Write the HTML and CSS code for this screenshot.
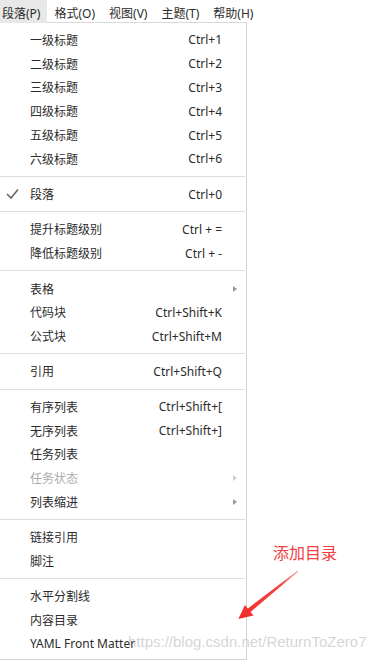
FILE: index.html
```html
<!DOCTYPE html>
<html lang="zh-CN">
<head>
    <meta charset="UTF-8">
    <meta name="viewport" content="width=device-width, initial-scale=1.0">
    <title>段落菜单</title>
    <link rel="stylesheet" href="styles.css">
</head>
<body>
    <div class="menubar">
        <div class="menubar-item active">段落(P)</div>
        <div class="menubar-item">格式(O)</div>
        <div class="menubar-item">视图(V)</div>
        <div class="menubar-item">主题(T)</div>
        <div class="menubar-item">帮助(H)</div>
    </div>

    <div class="menu">
        <div class="menu-item"><span class="check"></span><span class="label">一级标题</span><span class="key">Ctrl+1</span><span class="sub"></span></div>
        <div class="menu-item"><span class="check"></span><span class="label">二级标题</span><span class="key">Ctrl+2</span><span class="sub"></span></div>
        <div class="menu-item"><span class="check"></span><span class="label">三级标题</span><span class="key">Ctrl+3</span><span class="sub"></span></div>
        <div class="menu-item"><span class="check"></span><span class="label">四级标题</span><span class="key">Ctrl+4</span><span class="sub"></span></div>
        <div class="menu-item"><span class="check"></span><span class="label">五级标题</span><span class="key">Ctrl+5</span><span class="sub"></span></div>
        <div class="menu-item"><span class="check"></span><span class="label">六级标题</span><span class="key">Ctrl+6</span><span class="sub"></span></div>
        <div class="separator"></div>
        <div class="menu-item">
            <span class="check">
                <svg width="14" height="12" viewBox="0 0 14 12"><polyline points="1,6 5,10 12,1.5" fill="none" stroke="#666" stroke-width="1.6"/></svg>
            </span>
            <span class="label">段落</span><span class="key">Ctrl+0</span><span class="sub"></span>
        </div>
        <div class="separator"></div>
        <div class="menu-item"><span class="check"></span><span class="label">提升标题级别</span><span class="key">Ctrl + =</span><span class="sub"></span></div>
        <div class="menu-item"><span class="check"></span><span class="label">降低标题级别</span><span class="key">Ctrl + -</span><span class="sub"></span></div>
        <div class="separator"></div>
        <div class="menu-item"><span class="check"></span><span class="label">表格</span><span class="key"></span><span class="sub"><i class="arrow"></i></span></div>
        <div class="menu-item"><span class="check"></span><span class="label">代码块</span><span class="key">Ctrl+Shift+K</span><span class="sub"></span></div>
        <div class="menu-item"><span class="check"></span><span class="label">公式块</span><span class="key">Ctrl+Shift+M</span><span class="sub"></span></div>
        <div class="separator"></div>
        <div class="menu-item"><span class="check"></span><span class="label">引用</span><span class="key">Ctrl+Shift+Q</span><span class="sub"></span></div>
        <div class="separator"></div>
        <div class="menu-item"><span class="check"></span><span class="label">有序列表</span><span class="key">Ctrl+Shift+[</span><span class="sub"></span></div>
        <div class="menu-item"><span class="check"></span><span class="label">无序列表</span><span class="key">Ctrl+Shift+]</span><span class="sub"></span></div>
        <div class="menu-item"><span class="check"></span><span class="label">任务列表</span><span class="key"></span><span class="sub"></span></div>
        <div class="menu-item disabled"><span class="check"></span><span class="label">任务状态</span><span class="key"></span><span class="sub"><i class="arrow"></i></span></div>
        <div class="menu-item"><span class="check"></span><span class="label">列表缩进</span><span class="key"></span><span class="sub"><i class="arrow"></i></span></div>
        <div class="separator"></div>
        <div class="menu-item"><span class="check"></span><span class="label">链接引用</span><span class="key"></span><span class="sub"></span></div>
        <div class="menu-item"><span class="check"></span><span class="label">脚注</span><span class="key"></span><span class="sub"></span></div>
        <div class="separator"></div>
        <div class="menu-item"><span class="check"></span><span class="label">水平分割线</span><span class="key"></span><span class="sub"></span></div>
        <div class="menu-item"><span class="check"></span><span class="label">内容目录</span><span class="key"></span><span class="sub"></span></div>
        <div class="menu-item"><span class="check"></span><span class="label">YAML Front Matter</span><span class="key"></span><span class="sub"></span></div>
    </div>

    <!-- 标注 -->
    <div class="note">添加目录</div>
    <svg class="note-arrow" width="75" height="60" viewBox="0 0 75 60">
        <defs>
            <linearGradient id="arrow-fade" x1="0" y1="1" x2="1" y2="0">
                <stop offset="0" stop-color="#f22c2c"/>
                <stop offset="0.7" stop-color="#f24545"/>
                <stop offset="1" stop-color="#f9b0b0"/>
            </linearGradient>
        </defs>
        <polygon points="8.3,54 23.5,50.5 20.6,46.9 68.3,6.4 67.7,5.6 17.8,43.5 15,40 " fill="url(#arrow-fade)"/>
    </svg>
    <div class="watermark">https://blog.csdn.net/ReturnToZero7</div>
</body>
</html>
```

FILE: styles.css
```css
body {
    margin: 0;
    background-color: white;
    color: #2b2b2b;
    font-family: 'Noto Sans', 'Noto Sans CJK SC', sans-serif;
    font-size: 12px;
    height: 661px;
    overflow: hidden;
    position: relative;
}
.menubar {
    display: flex;
    align-items: flex-start;
    height: 22px;
    margin-left: -5px;
}
.menubar-item {
    box-sizing: border-box;
    height: 23px;
    padding: 4px 7px 0;
    line-height: 19px;
    white-space: nowrap;
}
.menubar-item.active {
    background-color: #e8e8e8;
    position: relative;
    z-index: 1;
}
.menu {
    width: 246px;
    border-top: 1px solid #d9d9d9;
    border-right: 1px solid #d4d4d4;
    border-bottom: 1px solid #d4d4d4;
    padding: 5px 0 3px;
}
.menu-item {
    display: grid;
    grid-template-columns: 30px 1fr auto 24px;
    align-items: center;
    height: 23.8px;
    white-space: nowrap;
}
.check {
    display: flex;
    justify-content: flex-start;
    padding-left: 6px;
}
.key {
    text-align: right;
}
.sub {
    display: flex;
    padding-left: 11px;
}
.arrow {
    display: block;
    width: 0;
    height: 0;
    border-left: 4px solid #999;
    border-top: 3.5px solid transparent;
    border-bottom: 3.5px solid transparent;
}
.disabled {
    color: #ababab;
}
.disabled .arrow {
    border-left-color: #cfcfcf;
}
.separator {
    height: 1px;
    margin: 5.25px 1px 5.25px 0;
    background-color: #dedede;
}
.note {
    position: absolute;
    left: 273px;
    top: 543px;
    font-family: 'Noto Sans CJK SC', sans-serif;
    font-size: 16px;
    line-height: 18px;
    color: #f04040;
}
.note-arrow {
    position: absolute;
    left: 230px;
    top: 565px;
}
.watermark {
    position: absolute;
    left: 128px;
    top: 634px;
    font-family: 'Liberation Sans', Arial, sans-serif;
    font-size: 15px;
    line-height: 15px;
    color: rgba(185, 185, 185, 0.6);
    white-space: nowrap;
}
```
